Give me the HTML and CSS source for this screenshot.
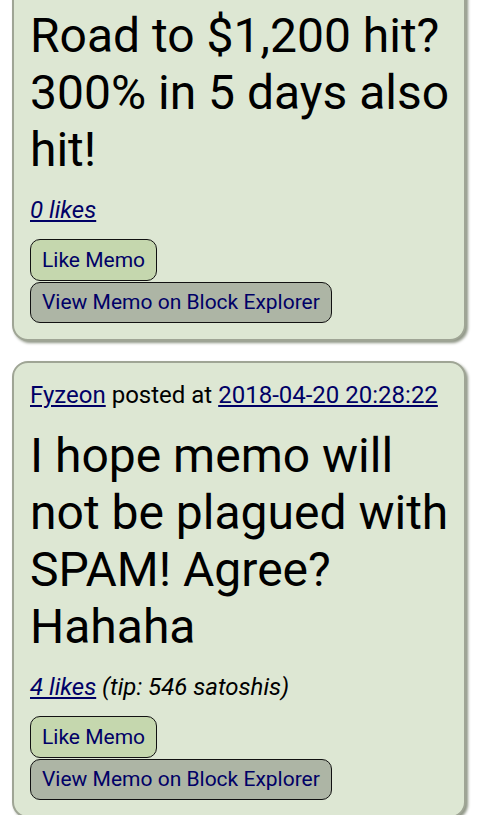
FILE: index.html
```html
<!DOCTYPE html>
<html>
<head>
<meta charset="utf-8">
<link rel="stylesheet" href="styles.css">
</head>
<body>
<div class="feed">
  <div class="card card-first">
    <p class="message">Road to $1,200 hit? 300% in 5 days also hit!</p>
    <p class="likes"><a href="#">0 likes</a></p>
    <div class="actions">
      <button class="btn btn-like">Like Memo</button>
      <button class="btn btn-view">View Memo on Block Explorer</button>
    </div>
  </div>
  <div class="card">
    <p class="meta"><a href="#">Fyzeon</a> posted at <a href="#">2018-04-20 20:28:22</a></p>
    <p class="message">I hope memo will not be plagued with SPAM! Agree? Hahaha</p>
    <p class="likes"><a href="#">4 likes</a> (tip: 546 satoshis)</p>
    <div class="actions">
      <button class="btn btn-like">Like Memo</button>
      <button class="btn btn-view">View Memo on Block Explorer</button>
    </div>
  </div>
</div>
</body>
</html>
```
FILE: styles.css
```css
html, body {
  margin: 0;
  padding: 0;
  background: #ffffff;
  font-family: Roboto, "Liberation Sans", sans-serif;
  color: #000;
}
.feed {
  display: flex;
  flex-direction: column;
  gap: 20px;
  padding: 0 14px 0 12px;
}
.card {
  background: #dde7d3;
  border: 2px solid #9fa595;
  border-radius: 16px;
  box-shadow: 2px 2px 3px #8f9686;
  padding: 18px 12px 16px 16px;
}
.card-first {
  margin-top: -60px;
  padding-top: 65px;
}
.card p {
  margin: 0;
}
.meta {
  font-size: 24px;
  margin-bottom: 18px !important;
}
.meta a, .likes a {
  color: #000066;
}
.message {
  font-size: 48px;
  color: #000;
}
.likes {
  font-size: 24px;
  font-style: italic;
  margin: 18px 0 15px !important;
}
.actions {
  display: flex;
  flex-direction: column;
  align-items: flex-start;
  gap: 1px;
}
.btn {
  font-family: Roboto, "Liberation Sans", sans-serif;
  font-size: 21px;
  color: #000066;
  border: 1.5px solid #111;
  border-radius: 10px;
  padding: 0 11px;
  height: 41.5px;
  cursor: pointer;
}
.btn-like {
  background: #c5d7ae;
}
.btn-view {
  background: #adb5a5;
}
```
